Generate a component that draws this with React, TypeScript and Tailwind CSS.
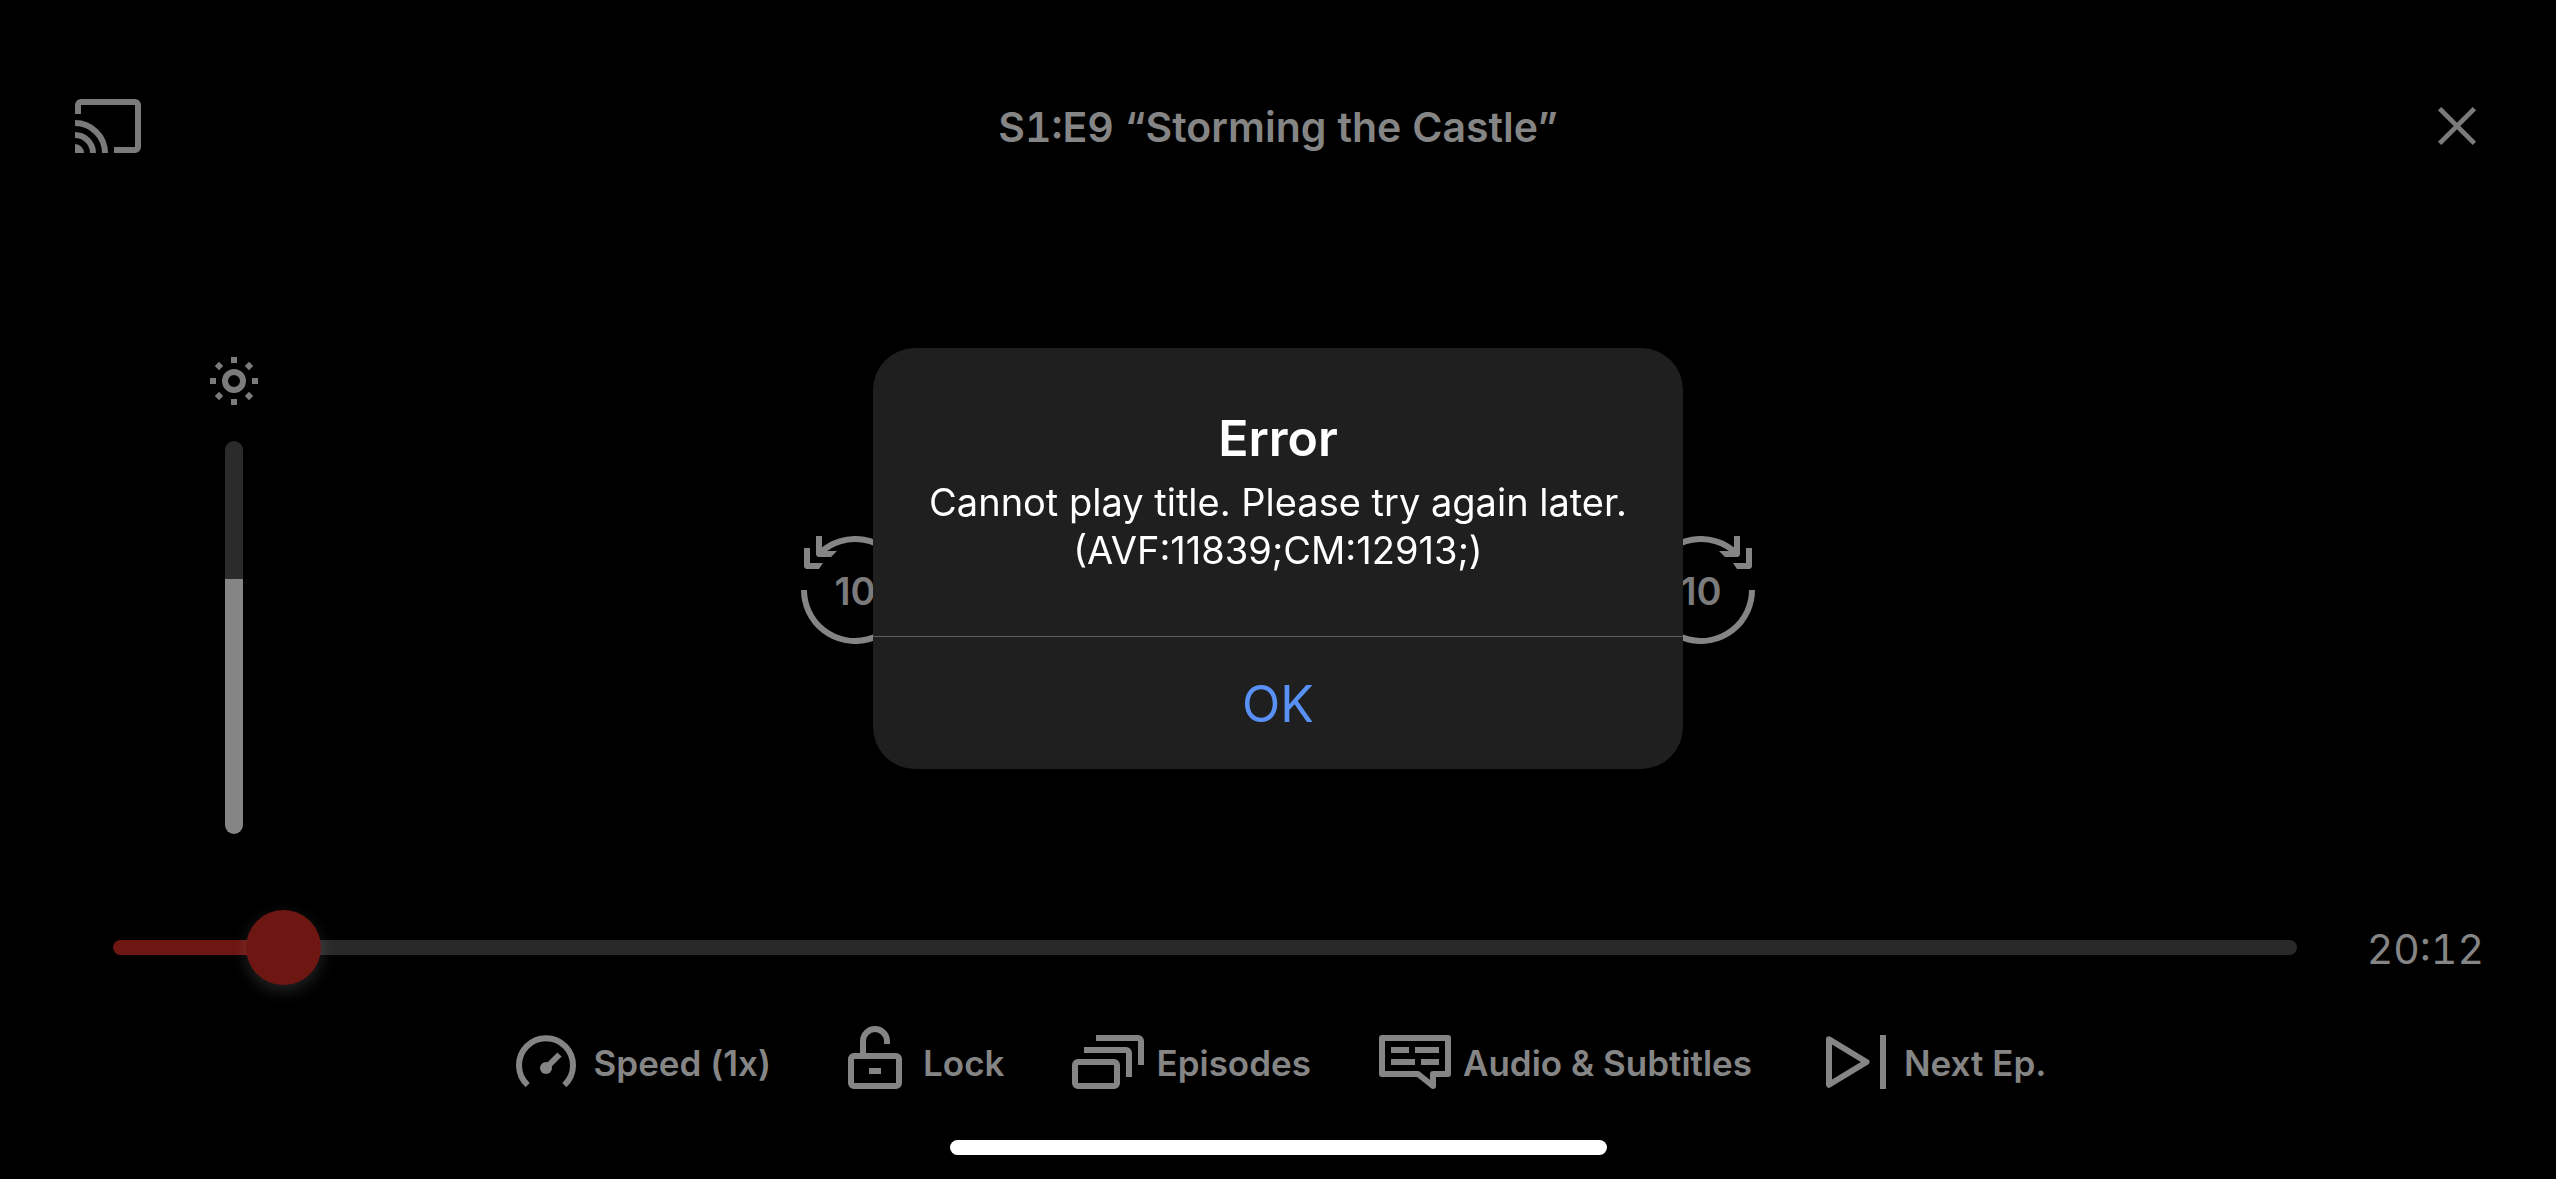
import React, { useState } from 'react';
import { cva } from 'class-variance-authority';

const icon = cva('w-[72px] h-[72px] shrink-0', {
  variants: {
    tone: {
      control: 'text-[#858585]',
      dim: 'text-[#7b7b7b]',
    },
  },
  defaultVariants: { tone: 'control' },
});

const CastIcon: React.FC = () => (
  <svg viewBox="0 0 24 24" className={icon({ tone: 'dim' })} fill="none" stroke="currentColor" strokeWidth="2" aria-hidden="true">
    <path d="M2 8V5a1 1 0 0 1 1-1h18a1 1 0 0 1 1 1v14a1 1 0 0 1-1 1h-7" />
    <path d="M1 11a10 10 0 0 1 10 10M1 15a6 6 0 0 1 6 6" />
    <path d="M1 18a3 3 0 0 1 3 3H1z" fill="currentColor" stroke="none" />
  </svg>
);

const CloseIcon: React.FC = () => (
  <svg viewBox="0 0 24 24" className={icon({ tone: 'dim' })} fill="none" stroke="currentColor" strokeWidth="1.6" aria-hidden="true">
    <path d="M6.2 6.2l11.6 11.6M17.8 6.2L6.2 17.8" />
  </svg>
);

const SunIcon: React.FC = () => (
  <svg viewBox="0 0 24 24" className={icon({ tone: 'dim' })} aria-hidden="true">
    <circle cx="12" cy="12" r="3" fill="none" stroke="currentColor" strokeWidth="2" />
    <g fill="currentColor">
      <path d="M11 4h2v2h-2zM11 18h2v2h-2zM4 11h2v2H4zM18 11h2v2h-2z" />
      <path d="M7 5.6L8.4 7 7 8.4 5.6 7zM17 5.6L18.4 7 17 8.4 15.6 7zM7 15.6L8.4 17 7 18.4 5.6 17zM17 15.6l1.4 1.4-1.4 1.4-1.4-1.4z" />
    </g>
  </svg>
);

const SpeedIcon: React.FC = () => (
  <svg viewBox="0 0 24 24" className={icon()} fill="none" stroke="currentColor" strokeWidth="2" aria-hidden="true">
    <path d="M5.9 19.7a9 9 0 1 1 12.2 0" />
    <path d="M12 14l4.5-4.5" />
    <circle cx="12" cy="14" r="2" fill="currentColor" stroke="none" />
  </svg>
);

const LockIcon: React.FC = () => (
  <svg viewBox="0 0 24 24" className={icon()} fill="none" stroke="currentColor" strokeWidth="2" aria-hidden="true">
    <rect x="4" y="10" width="16" height="10" rx="1" />
    <path d="M8 10V5a4 4 0 0 1 8 0v1M10 15h4" />
  </svg>
);

const EpisodesIcon: React.FC = () => (
  <svg viewBox="0 0 24 24" className={icon()} fill="none" stroke="currentColor" strokeWidth="2" aria-hidden="true">
    <rect x="1" y="12" width="14" height="8" rx="1" />
    <path d="M4 8h14a1 1 0 0 1 1 1v8M8 4h14a1 1 0 0 1 1 1v8" />
  </svg>
);

const SubtitlesIcon: React.FC = () => (
  <svg viewBox="0 0 24 24" className={icon()} fill="none" stroke="currentColor" strokeWidth="2" aria-hidden="true">
    <path d="M1 4h22v12h-5v4l-5-4H1z" strokeLinejoin="round" />
    <path d="M4 8h6M12 8h8M4 12h8M14 12h6" />
  </svg>
);

const NextIcon: React.FC = () => (
  <svg viewBox="0 0 24 24" className={icon()} fill="none" stroke="currentColor" strokeWidth="2" aria-hidden="true">
    <path d="M3 4.4L15.5 12 3 19.6z" strokeLinejoin="round" />
    <path d="M21 3v18" />
  </svg>
);

const SkipButton: React.FC<{ forward?: boolean }> = ({ forward = false }) => (
  <button type="button" aria-label={forward ? 'Forward 10 seconds' : 'Back 10 seconds'} className="grid place-items-center">
    <svg
      viewBox="0 0 108 108"
      className={forward ? 'col-start-1 row-start-1 w-[108px] h-[108px] -scale-x-100' : 'col-start-1 row-start-1 w-[108px] h-[108px]'}
      aria-hidden="true"
    >
      <path d="M3 54A51 51 0 1 0 20 16" fill="none" stroke="#858585" strokeWidth="6" />
      <path d="M15 0h6v15h15l-6 6H17l-2-2z" fill="#858585" />
      <path d="M3 12h6v15h13l-4 6H5l-2-2z" fill="#858585" />
    </svg>
    <span className="col-start-1 row-start-1 pt-0.5 text-[38px] leading-none font-semibold text-[#7b7b7b]">10</span>
  </button>
);

const actions = [
  { label: 'Speed (1x)', Icon: SpeedIcon },
  { label: 'Lock', Icon: LockIcon },
  { label: 'Episodes', Icon: EpisodesIcon },
  { label: 'Audio & Subtitles', Icon: SubtitlesIcon },
  { label: 'Next Ep.', Icon: NextIcon },
];

export default function App() {
  const [brightness, setBrightness] = useState(65);
  const [progress, setProgress] = useState(6.3);
  const [errorOpen, setErrorOpen] = useState(true);

  return (
    <div className="min-h-screen flex flex-col bg-black text-[#858585] font-['Inter',sans-serif]">
      {/* Top bar */}
      <header className="grid grid-cols-[1fr_auto_1fr] items-center px-[63px] pt-[90px]">
        <button type="button" aria-label="Cast" className="justify-self-start ml-[9px]">
          <CastIcon />
        </button>
        <h1 className="pt-0.5 text-[41px] leading-[48px] font-semibold tabular-nums">S1:E9 “Storming the Castle”</h1>
        <button type="button" aria-label="Close" className="justify-self-end">
          <CloseIcon />
        </button>
      </header>

      {/* Brightness and skip controls */}
      <main className="flex-1 grid grid-cols-[1fr_auto_1fr] items-center pt-[107px]">
        <div className="flex flex-col items-center gap-6 justify-self-start ml-[198px]">
          <SunIcon />
          <input
            type="range"
            aria-label="Brightness"
            min={0}
            max={100}
            value={brightness}
            onChange={(e) => setBrightness(Number(e.target.value))}
            className="appearance-none w-[18px] h-[393px] rounded-full [writing-mode:vertical-lr] [direction:rtl] [&::-webkit-slider-thumb]:appearance-none [&::-webkit-slider-thumb]:w-[18px] [&::-webkit-slider-thumb]:h-px"
            style={{ background: `linear-gradient(to top, #858585 ${brightness}%, #2b2b2b ${brightness}%)` }}
          />
        </div>
        <div className="flex items-center gap-[738px]">
          <SkipButton />
          <SkipButton forward />
        </div>
      </main>

      {/* Timeline */}
      <div className="flex items-center gap-[70px] pl-[113px] pr-[72px]">
        <input
          type="range"
          aria-label="Timeline"
          min={0}
          max={100}
          step={0.1}
          value={progress}
          onChange={(e) => setProgress(Number(e.target.value))}
          className="flex-1 min-w-0 h-[75px] appearance-none bg-transparent [&::-webkit-slider-runnable-track]:h-[15px] [&::-webkit-slider-runnable-track]:rounded-full [&::-webkit-slider-runnable-track]:bg-[linear-gradient(to_right,#6d1612_var(--played),#292929_var(--played))] [&::-webkit-slider-thumb]:appearance-none [&::-webkit-slider-thumb]:w-[75px] [&::-webkit-slider-thumb]:h-[75px] [&::-webkit-slider-thumb]:-mt-[30px] [&::-webkit-slider-thumb]:rounded-full [&::-webkit-slider-thumb]:bg-[#6d1612] [&::-webkit-slider-thumb]:shadow-[0_6px_16px_rgba(255,255,255,0.14)]"
          style={{ '--played': `${progress + 1}%` } as React.CSSProperties}
        />
        <time className="pt-0.5 text-[41px] leading-[48px] tabular-nums">20:12</time>
      </div>

      {/* Actions */}
      <nav className="flex items-center justify-center gap-[68px] mt-[41px]">
        {actions.map(({ label, Icon }) => (
          <button key={label} type="button" className="flex items-center gap-3 text-[35px] leading-[48px] font-semibold whitespace-nowrap">
            <Icon />
            <span className="pt-0.5">{label}</span>
          </button>
        ))}
      </nav>

      {/* Home indicator */}
      <div className="self-center w-[657px] h-[15px] mt-[42px] mb-6 rounded-full bg-white" />

      {errorOpen && (
        <div className="fixed inset-0 z-50 flex items-center justify-center pb-[62px]">
          <div role="alertdialog" aria-labelledby="error-title" aria-describedby="error-text" className="w-[810px] rounded-[42px] overflow-hidden bg-[#1f1f1f] text-white text-center">
            <div className="px-12 pt-[60px] pb-[62px]">
              <h2 id="error-title" className="text-[50px] leading-[60px] font-semibold">Error</h2>
              <p id="error-text" className="mt-2.5 text-[38px] leading-[48px]">
                Cannot play title. Please try again later.
                <br />
                (AVF:11839;CM:12913;)
              </p>
            </div>
            <button
              type="button"
              onClick={() => setErrorOpen(false)}
              className="block w-full h-[133px] border-t border-[#5e5e5e] pt-0.5 text-[50px] leading-[60px] text-[#5890f5]"
            >
              OK
            </button>
          </div>
        </div>
      )}
    </div>
  );
}
